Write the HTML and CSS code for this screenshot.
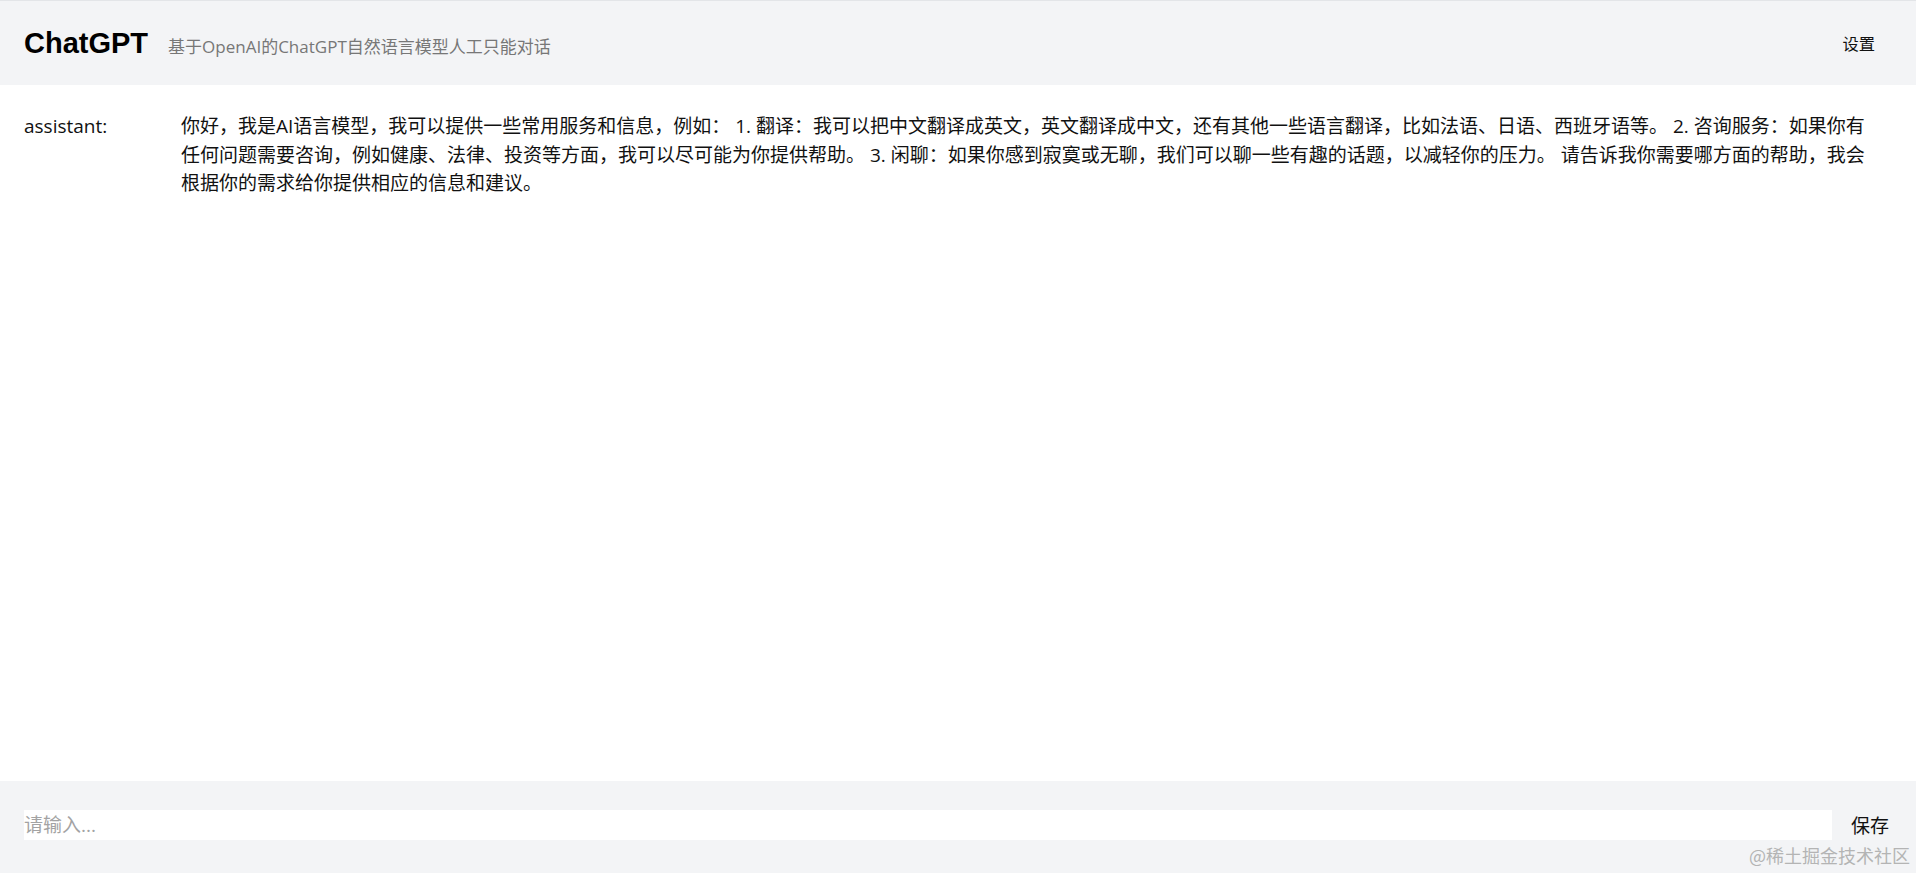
FILE: index.html
```html
<!DOCTYPE html>
<html lang="zh-CN">
<head>
    <meta charset="UTF-8">
    <meta name="viewport" content="width=device-width, initial-scale=1.0">
    <title>ChatGPT</title>
    <link rel="stylesheet" href="styles.css">
</head>
<body>

    <div class="header">
        <div class="brand">
            <h1>ChatGPT</h1>
            <span class="subtitle">基于OpenAI的ChatGPT自然语言模型人工只能对话</span>
        </div>
        <button class="settings-btn">设置</button>
    </div>

    <div class="chat-list">
        <div class="message">
            <div class="role">assistant:</div>
            <div class="content">你好，我是AI语言模型，我可以提供一些常用服务和信息，例如： 1. 翻译：我可以把中文翻译成英文，英文翻译成中文，还有其他一些语言翻译，比如法语、日语、西班牙语等。 2. 咨询服务：如果你有任何问题需要咨询，例如健康、法律、投资等方面，我可以尽可能为你提供帮助。 3. 闲聊：如果你感到寂寞或无聊，我们可以聊一些有趣的话题，以减轻你的压力。 请告诉我你需要哪方面的帮助，我会根据你的需求给你提供相应的信息和建议。</div>
        </div>
    </div>

    <div class="footer">
        <input type="text" class="chat-input" placeholder="请输入...">
        <button class="save-btn">保存</button>
        <span class="watermark">@稀土掘金技术社区</span>
    </div>

</body>
</html>
```

FILE: styles.css
```css
body {
    font-family: 'Open Sans', 'Noto Sans CJK SC', sans-serif;
    font-size: 19px;
    color: #111;
    margin: 0;
    height: 100vh;
    display: flex;
    flex-direction: column;
    background: #fff;
}
.header {
    height: 85px;
    box-sizing: border-box;
    background: #f3f4f6;
    border-top: 1px solid #e3e5e8;
    display: flex;
    align-items: center;
    justify-content: space-between;
    padding: 0 25px 0 24px;
}
.brand {
    display: flex;
    align-items: baseline;
}
.brand h1 {
    margin: 0;
    font-family: 'Liberation Sans', 'Noto Sans CJK SC', sans-serif;
    font-size: 29px;
    font-weight: bold;
    color: #000;
}
.subtitle {
    margin-left: 20px;
    font-size: 17px;
    color: #777;
}
.settings-btn,
.save-btn {
    background: transparent;
    border: none;
    font-family: 'Open Sans', 'Noto Sans CJK SC', sans-serif;
    font-size: 16.3px;
    color: #111;
    padding: 0 16px;
    cursor: pointer;
}
.chat-list {
    flex: 1;
    padding: 27px 34px 0 24px;
}
.message {
    display: flex;
    line-height: 28.5px;
}
.role {
    flex: 0 0 157px;
}
.content {
    flex: 1;
}
.footer {
    position: relative;
    height: 92px;
    box-sizing: border-box;
    background: #f3f4f6;
    display: flex;
    align-items: flex-start;
    padding: 29px 11px 0 24px;
}
.chat-input {
    flex: 1;
    height: 30px;
    box-sizing: border-box;
    border: none;
    outline: none;
    background: #fff;
    padding: 0;
    font-family: 'Open Sans', 'Noto Sans CJK SC', sans-serif;
    font-size: 19px;
    color: #111;
}
.chat-input::placeholder {
    color: #a3a3a3;
}
.save-btn {
    height: 30px;
    margin-left: 3px;
    font-size: 19px;
}
.watermark {
    position: absolute;
    right: 6px;
    bottom: 5px;
    font-family: 'Noto Sans CJK SC', sans-serif;
    font-size: 18px;
    color: #b4b4b4;
}
```
